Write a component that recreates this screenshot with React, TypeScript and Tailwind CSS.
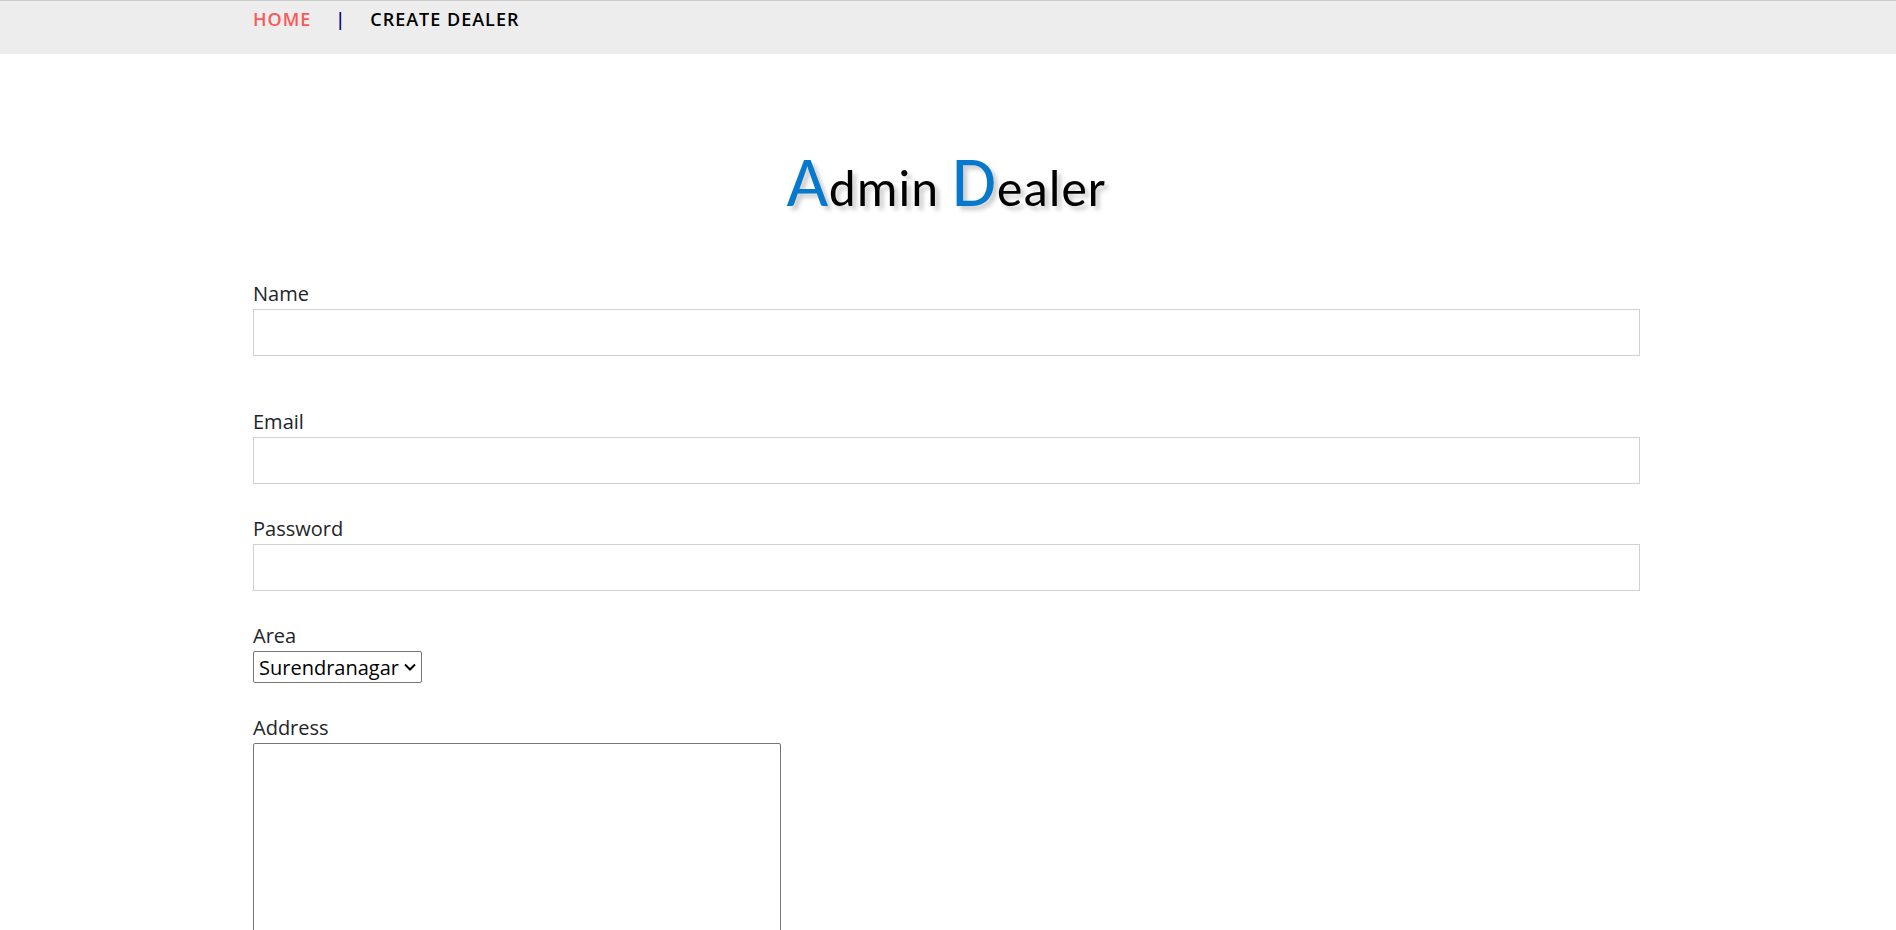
import React from "react";

type FieldProps = {
  id: string;
  label: string;
  children: React.ReactNode;
};

function Field({ id, label, children }: FieldProps) {
  return (
    <div className="flex flex-col items-start">
      <label htmlFor={id} className="text-xl leading-[30px] text-[#212529]">
        {label}
      </label>
      {children}
    </div>
  );
}

const boxClass =
  "h-[47px] w-full border border-[#ced0d6] bg-white px-3 text-xl text-[#212529] outline-none";

export default function App() {
  return (
    <div className="min-h-screen bg-white font-['Open_Sans',sans-serif]">
      <header className="border-t border-[#cccccc] bg-[#ededed] pr-64 pb-[17px] pl-[253px]">
        <nav className="flex h-9 items-center text-lg font-semibold tracking-[1px]">
          <a href="#home" className="text-[#f95959]">
            HOME
          </a>
          <span className="mx-6 text-[#000080]">|</span>
          <a href="#create-dealer" className="text-black">
            CREATE DEALER
          </a>
        </nav>
      </header>

      <main className="pr-64 pl-[253px]">
        <h1 className="h-[225px] pt-[89px] text-center font-['Carlito','Lato',sans-serif] text-[51px] leading-[76px] tracking-[1px] text-black [text-shadow:4px_4px_4px_#ccc]">
          <span className="text-[72px] text-[#0779cc]">A</span>dmin{" "}
          <span className="text-[72px] text-[#0779cc]">D</span>ealer
        </h1>

        <form>
          <div className="mb-[51px]">
            <Field id="name" label="Name">
              <input id="name" type="text" className={boxClass} />
            </Field>
          </div>
          <div className="flex flex-col gap-[30px]">
            <Field id="email" label="Email">
              <input id="email" type="email" className={boxClass} />
            </Field>
            <Field id="password" label="Password">
              <input id="password" type="password" className={boxClass} />
            </Field>
            <Field id="area" label="Area">
              <div className="relative">
                <select
                  id="area"
                  className="h-8 w-[169px] appearance-none rounded-[2px] border border-[#767676] bg-white pt-px pl-[5px] text-xl leading-7 text-black"
                >
                  <option>Surendranagar</option>
                </select>
                <svg
                  viewBox="0 0 12 8"
                  className="pointer-events-none absolute top-3 right-[6px] h-2 w-3"
                  fill="none"
                  stroke="black"
                  strokeWidth="2"
                  aria-hidden="true"
                >
                  <path d="M1 1.5 6 6.5 11 1.5" />
                </svg>
              </div>
            </Field>
            <Field id="address" label="Address">
              <textarea
                id="address"
                rows={10}
                className="w-[528px] rounded-[2px] border border-[#767676] bg-white p-1 text-xl text-black"
              />
            </Field>
          </div>
        </form>
      </main>
    </div>
  );
}
